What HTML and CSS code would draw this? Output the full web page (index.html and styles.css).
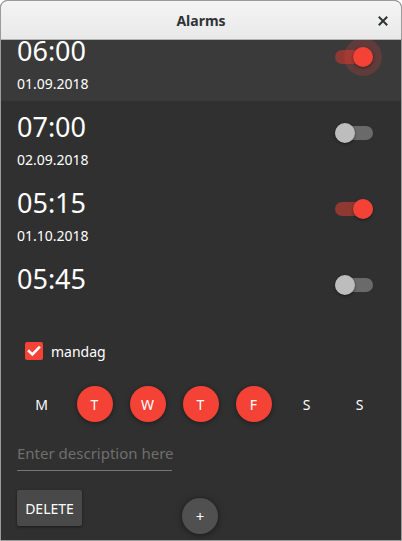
FILE: index.html
```html
<!DOCTYPE html>
<html>
<head>
<meta charset="utf-8">
<link rel="stylesheet" href="styles.css">
</head>
<body>
<div class="window">
  <div class="titlebar">
    <span class="title">Alarms</span>
    <svg class="close" width="10" height="10" viewBox="0 0 10 10"><path d="M1.5 1.5L8.5 8.5M8.5 1.5L1.5 8.5" stroke="#2e3436" stroke-width="2" stroke-linecap="square"/></svg>
  </div>
  <div class="content">
    <div class="list">
      <div class="row current">
        <div class="texts"><div class="time">06:00</div><div class="date">01.09.2018</div></div>
        <div class="switch on focus"><span class="track"></span><span class="halo"></span><span class="knob"></span></div>
      </div>
      <div class="row">
        <div class="texts"><div class="time">07:00</div><div class="date">02.09.2018</div></div>
        <div class="switch"><span class="track"></span><span class="knob"></span></div>
      </div>
      <div class="row">
        <div class="texts"><div class="time">05:15</div><div class="date">01.10.2018</div></div>
        <div class="switch on"><span class="track"></span><span class="knob"></span></div>
      </div>
      <div class="row last">
        <div class="texts"><div class="time">05:45</div></div>
        <div class="switch"><span class="track"></span><span class="knob"></span></div>
      </div>
      <div class="details">
        <label class="check">
          <span class="box"><svg width="18" height="18" viewBox="0 0 18 18"><path d="M4 9.2L7.4 12.4L14 5.6" fill="none" stroke="#fff" stroke-width="2.6" stroke-linecap="square"/></svg></span>
          <span class="check-label">mandag</span>
        </label>
        <div class="days">
          <div class="day"><span class="dot">M</span></div>
          <div class="day"><span class="dot sel">T</span></div>
          <div class="day"><span class="dot sel">W</span></div>
          <div class="day"><span class="dot sel">T</span></div>
          <div class="day"><span class="dot sel">F</span></div>
          <div class="day"><span class="dot">S</span></div>
          <div class="day"><span class="dot">S</span></div>
        </div>
        <div class="field"><span class="placeholder">Enter description here</span></div>
        <div class="footer">
          <button class="delete">DELETE</button>
        </div>
      </div>
    </div>
    <div class="fab">+</div>
  </div>
</div>
</body>
</html>
```

FILE: styles.css
```css
html, body {
  margin: 0;
  padding: 0;
  background: #ffffff;
}
body {
  width: 402px;
  height: 541px;
  overflow: hidden;
  font-family: "Noto Sans", "Open Sans", sans-serif;
}
.window {
  box-sizing: border-box;
  width: 402px;
  height: 541px;
  border: 1px solid #9b9b9b;
  border-radius: 7px 7px 0 0;
  overflow: hidden;
  display: flex;
  flex-direction: column;
  background: #303030;
}
.titlebar {
  height: 38px;
  flex: none;
  border-bottom: 1px solid #b4b4b4;
  background: linear-gradient(#f4f4f4, #e9e9e9);
  display: flex;
  align-items: center;
  justify-content: center;
  position: relative;
}
.title {
  font-size: 14px;
  font-weight: 700;
  color: #2e3436;
  margin-top: 1px;
}
.close {
  position: absolute;
  right: 13px;
  top: 15px;
}
.content {
  flex: 1;
  position: relative;
  overflow: hidden;
  background: #303030;
}
.list {
  margin-top: -15px;
}
.row {
  height: 76px;
  display: flex;
  justify-content: space-between;
  align-items: flex-start;
  padding-left: 16px;
  padding-right: 28px;
}
.row.current {
  background: #3a3a3a;
}
.time {
  font-size: 27px;
  line-height: 32px;
  margin-top: 10px;
  color: #ffffff;
}
.date {
  font-size: 14px;
  line-height: 18px;
  margin-top: 8px;
  color: #ffffff;
}
.switch {
  position: relative;
  width: 38px;
  height: 20px;
  margin-top: 22px;
}
.switch .track {
  position: absolute;
  left: 0;
  top: 3px;
  width: 38px;
  height: 14px;
  border-radius: 7px;
  background: #6a6a6a;
}
.switch .knob {
  position: absolute;
  left: 0;
  top: 0;
  width: 20px;
  height: 20px;
  border-radius: 50%;
  background: #bdbdbd;
  box-shadow: 0 1px 3px rgba(0,0,0,0.45);
}
.switch.on .track {
  background: #8f3932;
}
.switch.on .knob {
  left: 18px;
  background: #f44336;
}
.switch .halo {
  position: absolute;
  left: 9px;
  top: -9px;
  width: 38px;
  height: 38px;
  border-radius: 50%;
  background: rgba(244, 67, 54, 0.2);
}
.details {
  padding-top: 13px;
}
.check {
  display: flex;
  align-items: center;
  padding-left: 24px;
  height: 18px;
}
.box {
  width: 18px;
  height: 18px;
  border-radius: 2px;
  background: #f44336;
  display: block;
}
.box svg { display: block; }
.check-label {
  margin-left: 8px;
  font-size: 14px;
  color: #ffffff;
}
.days {
  display: grid;
  grid-template-columns: repeat(7, 53px);
  padding-left: 14px;
  margin-top: 26px;
  height: 36px;
}
.day {
  display: flex;
  justify-content: center;
}
.dot {
  width: 36px;
  height: 36px;
  border-radius: 50%;
  display: flex;
  align-items: center;
  justify-content: center;
  font-size: 14px;
  color: #ffffff;
}
.dot.sel {
  background: #f44336;
  box-shadow: 0 1px 5px rgba(0,0,0,0.45);
}
.field {
  margin-top: 20px;
  margin-left: 16px;
  width: 155px;
  height: 20px;
  padding-bottom: 8px;
  border-bottom: 1px solid #767676;
}
.placeholder {
  font-size: 15px;
  line-height: 20px;
  color: #6f6f6f;
  white-space: nowrap;
}
.footer {
  margin-top: 19px;
  padding-left: 16px;
}
.delete {
  width: 65px;
  height: 36px;
  border: none;
  border-radius: 2px;
  background: #494949;
  color: #ffffff;
  font-family: "Noto Sans", "Open Sans", sans-serif;
  font-size: 14px;
  font-weight: 400;
  padding: 0;
  box-shadow: 0 1px 3px rgba(0,0,0,0.5);
}
.fab {
  position: absolute;
  left: 181px;
  top: 458px;
  width: 36px;
  height: 36px;
  border-radius: 50%;
  background: #505050;
  color: #ffffff;
  font-size: 15px;
  display: flex;
  align-items: center;
  justify-content: center;
  box-shadow: 0 1px 6px rgba(0,0,0,0.5);
}
```
